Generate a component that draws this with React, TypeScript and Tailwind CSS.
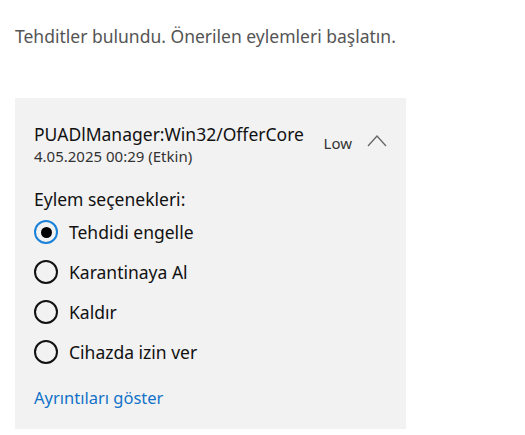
const options = ["Tehdidi engelle", "Karantinaya Al", "Kaldır", "Cihazda izin ver"];

function Radio({ checked }: { checked: boolean }) {
  return (
    <span
      className={
        "flex h-[24px] w-[24px] shrink-0 items-center justify-center rounded-full border-[2.5px] " +
        (checked ? "border-[#1a82d8]" : "border-[#111]")
      }
    >
      {checked && <span className="h-[11px] w-[11px] rounded-full bg-black" />}
    </span>
  );
}

export default function App() {
  return (
    <main
      className="h-[435px] w-[525px] overflow-hidden bg-white pt-[24px]"
      style={{ fontFamily: '"Segoe UI", "Noto Sans", sans-serif' }}
    >
      <p className="px-[15px] text-[17.5px] leading-[24px] text-[#555]">
        Tehditler bulundu. Önerilen eylemleri başlatın.
      </p>

      <section className="ml-[15px] mt-[50px] w-[391px] bg-[#f2f2f2] px-[19px] pb-[19px] pt-[24px]">
        <div className="flex items-start">
          <div className="flex-1">
            <div className="text-[17.5px] leading-[24px] text-[#111]">PUADlManager:Win32/OfferCore</div>
            <div className="mt-[1px] text-[15px] leading-[18px] text-[#333]">4.05.2025 00:29 (Etkin)</div>
          </div>
          <span className="mt-[12px] text-[15px] leading-[18px] text-[#333]">Low</span>
          <svg className="ml-[15px] mt-[12px]" width="20" height="14" viewBox="0 0 20 14">
            <path d="M1 12 L10 2 L19 12" fill="none" stroke="#666" strokeWidth="1.3" />
          </svg>
        </div>

        <div className="mt-[22px] text-[17.5px] leading-[24px] text-[#111]">Eylem seçenekleri:</div>

        <div className="mt-[1px] flex flex-col">
          {options.map((label, i) => (
            <label key={label} className="flex h-[40px] items-center gap-[11px]">
              <Radio checked={i === 0} />
              <span className="text-[17.5px] text-[#111]">{label}</span>
            </label>
          ))}
        </div>

        <a className="mt-[14px] block text-[16.5px] leading-[24px] text-[#1372c8]">Ayrıntıları göster</a>
      </section>
    </main>
  );
}
